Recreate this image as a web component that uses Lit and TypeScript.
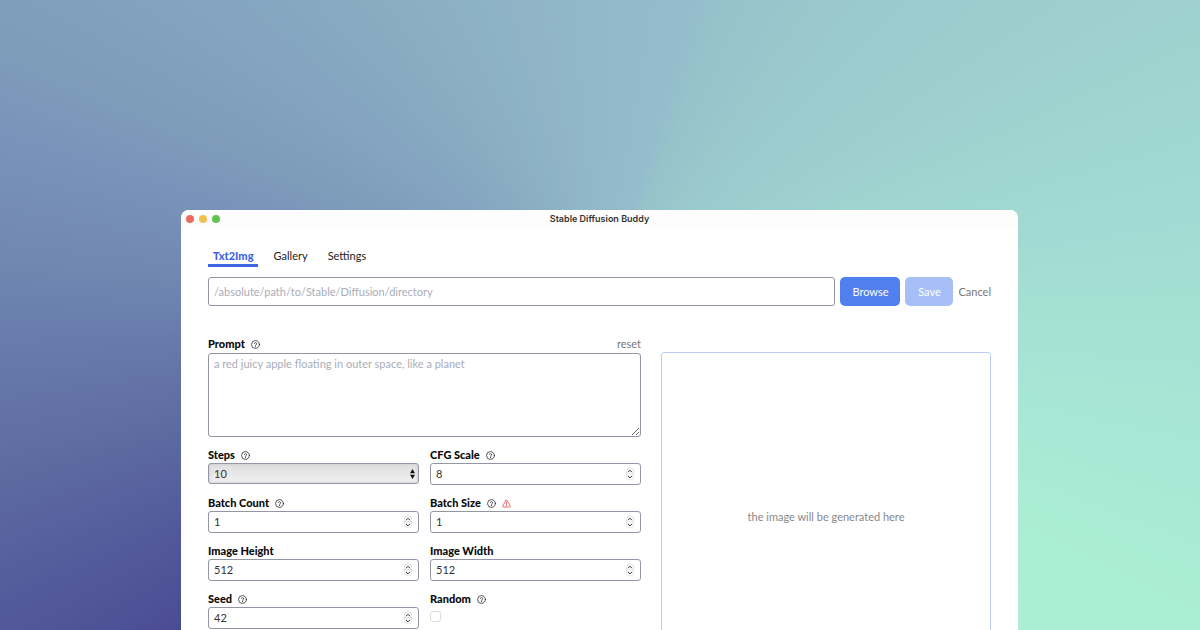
import { LitElement, html, svg, css, nothing } from "lit";
import { customElement, property } from "lit/decorators.js";

const helpIcon = html`<svg class="icon" viewBox="0 0 24 24" aria-hidden="true">
  <circle cx="12" cy="12" r="10.5" />
  <path d="M8.9 9.2a3.2 3.2 0 0 1 6.2 1c0 2.1-3.1 2.6-3.1 4.4" />
  <path d="M12 17.2v.9" />
</svg>`;

const warningIcon = html`<svg class="icon warn" viewBox="0 0 24 24" aria-hidden="true">
  <path d="M10.6 3.6 1.8 19a1.6 1.6 0 0 0 1.4 2.4h17.6a1.6 1.6 0 0 0 1.4-2.4L13.4 3.6a1.6 1.6 0 0 0-2.8 0z" />
  <path d="M12 9v5.5M12 17v1" />
</svg>`;

const shared = css`
  .label-row {
    display: flex;
    align-items: center;
    gap: 6px;
    height: 16px;
    font-weight: 900;
    color: #0a0a0a;
  }
  .icon {
    width: 9px;
    height: 9px;
    fill: none;
    stroke: #222;
    stroke-width: 2;
    stroke-linecap: round;
    stroke-linejoin: round;
    flex: none;
  }
  .warn {
    stroke: #dc3c3c;
  }
  .box {
    box-sizing: border-box;
    width: 100%;
    border: 1px solid #9397a5;
    border-radius: 3px;
    background: #fff;
    color: #333;
    font: inherit;
  }
`;

@customElement("number-field")
export class NumberField extends LitElement {
  @property() label = "";
  @property() value = "";
  @property({ type: Boolean }) help = false;
  @property({ type: Boolean }) warning = false;

  static styles = [
    shared,
    css`
      :host {
        display: block;
      }
      .number {
        display: flex;
        align-items: center;
        height: 22px;
        padding: 0 6px 0 5px;
      }
      input {
        flex: 1;
        min-width: 0;
        padding: 0;
        border: 0;
        outline: 0;
        background: none;
        color: inherit;
        font: inherit;
        appearance: textfield;
      }
      input::-webkit-inner-spin-button {
        appearance: none;
      }
      .spinner {
        width: 8px;
        height: 14px;
        flex: none;
      }
    `,
  ];

  render() {
    return html`
      <div class="label-row">
        <label for="field">${this.label}</label>
        ${this.help ? helpIcon : nothing} ${this.warning ? warningIcon : nothing}
      </div>
      <div class="box number">
        <input id="field" type="number" .value=${this.value} />
        <svg class="spinner" viewBox="0 0 8 14" aria-hidden="true">
          <rect x="0.5" y="1" width="7" height="12" rx="3" fill="#fafafa" stroke="#dedede" stroke-width="0.7" />
          ${svg`<path d="M2.3 4.9 4 3.2l1.7 1.7M2.3 9.2 4 10.9l1.7-1.7" fill="none" stroke="#333" stroke-width="1" stroke-linecap="round" stroke-linejoin="round" />`}
          <path d="M0.5 7h7" stroke="#e2e2e2" stroke-width="0.6" />
        </svg>
      </div>
    `;
  }
}

@customElement("app-root")
export class AppRoot extends LitElement {
  static styles = [
    shared,
    css`
      :host {
        display: block;
        box-sizing: border-box;
        height: 100vh;
        overflow: hidden;
        padding: 210px 182px 0 181px;
        font: 11px/16px Lato, "Liberation Sans", sans-serif;
        color: #222;
        background: conic-gradient(
          #92b9c9 0deg,
          #94bccc 16deg,
          #96c2ca 22deg,
          #9bcacd 42deg,
          #9ed1cf 62deg,
          #a2dad3 80deg,
          #a7e6d5 100deg,
          #aaeed4 118deg,
          #abf0d4 130deg,
          #444088 222deg,
          #4a4c92 233deg,
          #52599b 243deg,
          #5e6ca2 256deg,
          #687aab 267deg,
          #7189b2 276deg,
          #7a93ba 287deg,
          #7e9cba 294deg,
          #84a4bf 308deg,
          #8bb0c4 332deg,
          #92b9c9 360deg
        );
      }
      .window {
        overflow: hidden;
        border-radius: 8px 8px 0 0;
        background: #fff;
      }
      .titlebar {
        display: grid;
        grid-template-columns: 1fr auto 1fr;
        align-items: center;
        height: 18px;
        padding: 0 5px;
        background: #fdfdfd;
      }
      .lights {
        display: flex;
        gap: 5px;
      }
      .light {
        width: 8px;
        height: 8px;
        border-radius: 50%;
      }
      .close {
        background: #ed6a5f;
      }
      .minimise {
        background: #f5bf4f;
      }
      .zoom {
        background: #61c554;
      }
      .title {
        margin: 0;
        font: 600 9px/18px Inter, sans-serif;
        color: #333;
      }
      .content {
        padding: 20px 27px 27px;
      }
      .tabs {
        display: flex;
        gap: 10px;
        margin-bottom: 10px;
      }
      .tab {
        padding: 0 5px;
        border-bottom: 3px solid transparent;
        color: #222;
        text-decoration: none;
      }
      .active {
        border-color: #3f66e4;
        color: #3f66e4;
        font-weight: 900;
      }
      .path-row {
        display: flex;
        gap: 5px;
        margin-bottom: 30px;
      }
      .path {
        flex: 1;
        min-width: 0;
        height: 29px;
        padding: 0 5px;
      }
      ::placeholder {
        color: #a9adb8;
        opacity: 1;
      }
      button {
        padding: 0;
        border: 0;
        background: none;
        font: inherit;
        color: #777;
      }
      .primary {
        min-width: 48px;
        padding: 0 12px;
        border-radius: 5px;
        background: #4f80ee;
        color: #fff;
      }
      .primary:disabled {
        background: #a7bff7;
      }
      .columns {
        display: grid;
        grid-template-columns: 433fr 330fr;
        align-items: start;
        gap: 20px;
      }
      .prompt {
        display: block;
        height: 84px;
        margin-top: 1px;
        padding: 2px 5px;
        resize: vertical;
      }
      .reset {
        margin-left: auto;
        font-weight: 400;
      }
      .fields {
        display: grid;
        grid-template-columns: 1fr 1fr;
        gap: 10px 11px;
        margin-top: 10px;
      }
      .select-wrap {
        display: grid;
        align-items: center;
      }
      .select-wrap > * {
        grid-area: 1 / 1;
      }
      select.box {
        height: 21px;
        padding: 0 5px;
        appearance: none;
        background: linear-gradient(#dfdfdf, #f0f0f0);
        box-shadow: inset 0 0 3px #c4c4c4;
      }
      .arrows {
        justify-self: end;
        width: 5px;
        height: 10px;
        margin-right: 4px;
        pointer-events: none;
      }
      .check {
        display: block;
        appearance: none;
        box-sizing: border-box;
        width: 11px;
        height: 11px;
        margin: 4px 0 0;
        border: 1px solid #dcdcdc;
        border-radius: 3px;
        background: #fff;
      }
      .preview {
        display: grid;
        place-items: center;
        box-sizing: border-box;
        aspect-ratio: 1;
        margin-top: 16px;
        border: 1px solid #bccdf6;
        border-radius: 3px;
        color: #888;
      }
    `,
  ];

  render() {
    return html`
      <main class="window">
        <header class="titlebar">
          <div class="lights">
            <span class="light close"></span>
            <span class="light minimise"></span>
            <span class="light zoom"></span>
          </div>
          <h1 class="title">Stable Diffusion Buddy</h1>
        </header>
        <div class="content">
          <nav class="tabs">
            <a class="tab active" href="#txt2img" aria-current="page">Txt2Img</a>
            <a class="tab" href="#gallery">Gallery</a>
            <a class="tab" href="#settings">Settings</a>
          </nav>
          <div class="path-row">
            <input class="box path" type="text" aria-label="Directory" placeholder="/absolute/path/to/Stable/Diffusion/directory" />
            <button class="primary">Browse</button>
            <button class="primary" disabled>Save</button>
            <button>Cancel</button>
          </div>
          <div class="columns">
            <form>
              <div class="label-row">
                <label for="prompt">Prompt</label>
                ${helpIcon}
                <button class="reset" type="reset">reset</button>
              </div>
              <textarea id="prompt" class="box prompt" placeholder="a red juicy apple floating in outer space, like a planet"></textarea>
              <div class="fields">
                <div>
                  <div class="label-row"><label for="steps">Steps</label>${helpIcon}</div>
                  <div class="select-wrap">
                    <select id="steps" class="box">
                      <option>10</option>
                      <option>20</option>
                      <option>50</option>
                    </select>
                    <svg class="arrows" viewBox="0 0 5 10" aria-hidden="true">
                      <path d="M2.5 0 5 4.3H0zM2.5 10 0 5.7h5z" fill="#111" />
                    </svg>
                  </div>
                </div>
                <number-field label="CFG Scale" value="8" help></number-field>
                <number-field label="Batch Count" value="1" help></number-field>
                <number-field label="Batch Size" value="1" help warning></number-field>
                <number-field label="Image Height" value="512"></number-field>
                <number-field label="Image Width" value="512"></number-field>
                <number-field label="Seed" value="42" help></number-field>
                <div>
                  <div class="label-row"><label for="random">Random</label>${helpIcon}</div>
                  <input id="random" class="check" type="checkbox" />
                </div>
              </div>
            </form>
            <section class="preview">the image will be generated here</section>
          </div>
        </div>
      </main>
    `;
  }
}
